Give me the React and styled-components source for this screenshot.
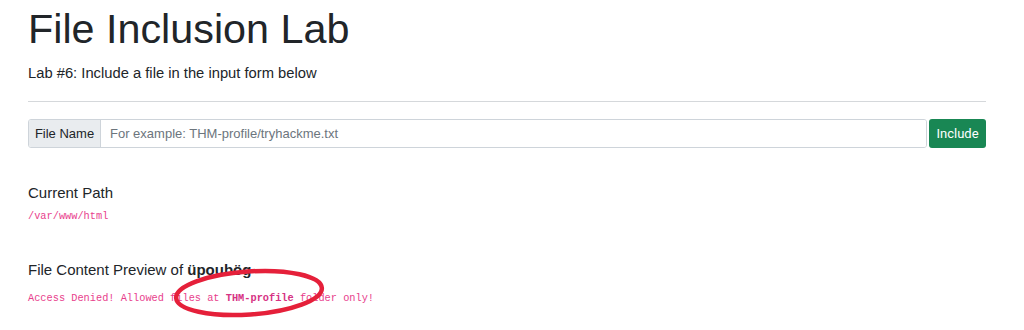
import React from "react";
import styled, { createGlobalStyle } from "styled-components";

const GlobalStyle = createGlobalStyle`
  body {
    margin: 0;
    min-height: 330px;
    background: #fff;
    color: #212529;
    font-family: "Liberation Sans", Arial, sans-serif;
  }
`;

const Container = styled.div`
  position: relative;
  width: 958px;
  min-height: 330px;
  box-sizing: content-box;
  padding: 5px 0 0 28px;
`;

const Title = styled.h1`
  margin: 0;
  font-size: 41.3px;
  line-height: 48px;
  font-weight: 400;
`;

const Subtitle = styled.p`
  margin: 9px 0 0;
  font-size: 14.75px;
  line-height: 22px;
`;

const Divider = styled.hr`
  margin: 17px 0 0;
  border: 0;
  border-top: 1px solid #d5d8db;
  height: 0;
`;

const InputGroup = styled.form`
  display: flex;
  gap: 2px;
  margin-top: 17px;
  height: 29px;
`;

const Field = styled.div`
  display: flex;
  flex: 1;
  border: 1px solid #ced4da;
  border-radius: 3px;
  overflow: hidden;
`;

const Addon = styled.label`
  display: flex;
  align-items: center;
  justify-content: center;
  flex: 0 0 71px;
  white-space: nowrap;
  background: #e9ecef;
  border-right: 1px solid #ced4da;
  color: #212529;
  font-size: 13px;
`;

const TextInput = styled.input`
  flex: 1;
  border: none;
  outline: none;
  padding: 0 9px;
  font-family: inherit;
  font-size: 13px;
  color: #495057;

  &::placeholder {
    color: #6c757d;
  }
`;

const Button = styled.button`
  width: 57px;
  border: none;
  border-radius: 3px;
  background: #198754;
  color: #fff;
  font-family: Roboto, "Liberation Sans", sans-serif;
  font-size: 13px;
  cursor: pointer;
`;

const SectionTitle = styled.h5`
  margin: ${(p) => p.$top}px 0 0;
  font-size: 15px;
  line-height: 22px;
  font-weight: 400;

  b {
    font-weight: 700;
  }
`;

const Code = styled.code`
  display: block;
  margin-top: ${(p) => p.$top}px;
  font-family: "Liberation Mono", "DejaVu Sans Mono", monospace;
  font-size: 10.3px;
  line-height: 16px;
  color: #e83e8c;

  b {
    font-weight: 700;
    color: #d63384;
  }
`;

const Annotation = styled.svg`
  position: absolute;
  left: 168px;
  top: 262px;
  pointer-events: none;
`;

export default function App() {
  return (
    <>
      <GlobalStyle />
      <Container>
        <Title>File Inclusion Lab</Title>
        <Subtitle>Lab #6: Include a file in the input form below</Subtitle>
        <Divider />
        <InputGroup onSubmit={(e) => e.preventDefault()}>
          <Field>
            <Addon htmlFor="file">File Name</Addon>
            <TextInput id="file" placeholder="For example: THM-profile/tryhackme.txt" />
          </Field>
          <Button type="submit">Include</Button>
        </InputGroup>
        <SectionTitle $top={34}>Current Path</SectionTitle>
        <Code $top={4}>/var/www/html</Code>
        <SectionTitle $top={35}>
          File Content Preview of <b>üpoubög</b>
        </SectionTitle>
        <Code $top={9}>
          Access Denied! Allowed files at <b>THM-profile</b> folder only!
        </Code>
        <Annotation width="165" height="60" viewBox="0 0 165 60">
          <ellipse
            cx="81"
            cy="31"
            rx="73"
            ry="21.5"
            transform="rotate(-4 81 31)"
            fill="none"
            stroke="#e5203a"
            strokeWidth="4.5"
          />
        </Annotation>
      </Container>
    </>
  );
}
